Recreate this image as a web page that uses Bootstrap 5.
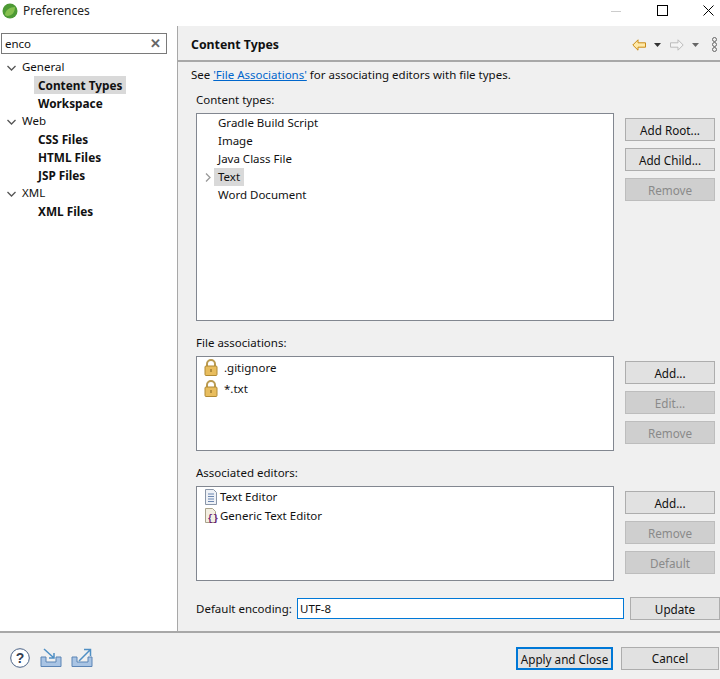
<!DOCTYPE html>
<html lang="en"><head><meta charset="utf-8"><title>Preferences</title>
<link href="https://cdn.jsdelivr.net/npm/bootstrap@5.3.0/dist/css/bootstrap.min.css" rel="stylesheet">
<style>
html,body{height:100%;overflow:hidden}
body{font-family:"Noto Sans","Open Sans",sans-serif;font-size:11.5px;line-height:18px;color:#111;background:#f0f0f0}
.win{width:720px;height:679px}
.titlebar{height:26px;background:#fff;padding:0 0 5px 2px}
.titlebar .ttl{margin-left:5px;color:#222;font-size:12px}
.winctl{margin-right:-11px}
.winbtn{width:46px;height:21px}
.midrow{min-height:0}
.side{width:178px;background:#fff;border-right:1px solid #a8a8a8;padding-top:7px}
.searchbox{width:166px;height:21px;margin-left:1px;border:1px solid #7a7a7a;padding:0 5px 0 3px;background:#fff}
.searchx{color:#666;font-size:13px;font-weight:700;line-height:1}
.tree{margin-top:4px;list-style:none;padding:0}
.tree li{height:18px;display:flex;align-items:center}
.tw{width:22px;padding-left:7px;flex:none}
.lv2{padding-left:34px;font-weight:700;font-size:11.8px}
.lv2 span{padding:0 4px;line-height:18px}
.sel{background:#d9d9d9}
.main{width:542px}
.head{height:36px;padding:3px 3px 0 13px;border-bottom:2px solid #a8a8a8}
.head b{font-size:12.3px}
.arr1{margin-left:8px}.arr2{margin-left:9px}.arr3{margin-left:13px}
.seeline{padding:4px 0 0 13px;height:29px}
.seeline a{color:#0066cc}
.body-area{padding:0 0 0 18px;flex:1}
.lbl{height:18px;line-height:18px;margin-bottom:4px}
.sp{margin-top:13px}
.boxrow{display:flex;gap:11px}
.lbox{width:418px;background:#fff;border:1px solid #828790;list-style:none;margin:0;padding:0}
.btncol{width:90px;display:flex;flex-direction:column;gap:7px;padding-top:5px}
.wbtn{width:90px;height:23px;padding:0;border:1px solid #adadad;background:#e1e1e1;color:#111;border-radius:0;font-size:11.7px;line-height:20px;font-family:inherit}
.wbtn[disabled]{opacity:1;color:#8a8a8a;background:#cfcfcf;border-color:#bdbdbd}
.b1{height:208px}.b2{height:95px}
.ct{padding-left:21px}
.ct li{height:18px;display:flex;align-items:center;position:relative}
.ct span{padding:0 4px;margin-left:-4px;line-height:18px}
.ct svg{position:absolute;left:-13px;top:5px}
.il{padding:0 0 0 7px}
.il li{display:flex;align-items:center;height:21px;gap:6px}
.el{padding:0 0 0 7px}
.el li{display:flex;align-items:center;height:19px;gap:2px}
.gicon{margin-right:-2px}
.enc{height:23px;margin-top:16px;display:flex;align-items:center}
.enc span{width:96px;white-space:nowrap}
.enc input{width:327px;height:21px;border:1px solid #0078d7;margin-left:5px;padding:0 2px;font-size:11.5px;font-family:inherit;outline:0;color:#111}
.enc .wbtn{margin-left:6px}
.foot{height:48px;border-top:2px solid #a8a8a8;padding:4px 1px 0 10px}
.ic1{margin-left:10px}.ic2{margin-left:9px}
.okb{width:97px;border:2px solid #0078d7}
.cnb{width:98px}
</style></head><body>
<div class="win d-flex flex-column">
 <div class="titlebar d-flex align-items-center">
  <svg width="16" height="16" viewBox="0 0 16 16"><circle cx="8" cy="8" r="7.500" fill="#4d9a35"/><path d="M3 12C3 7 8 4 13 4c0 5-3 9-8 9z" fill="#86c04f"/></svg>
  <span class="ttl">Preferences</span>
  <div class="ms-auto d-flex winctl">
   <div class="winbtn d-flex align-items-center justify-content-center"><svg width="10" height="10"><path d="M0 5.500h10" stroke="#ccc"/></svg></div>
   <div class="winbtn d-flex align-items-center justify-content-center"><svg width="11" height="11"><rect x=".5" y=".5" width="10" height="10" fill="none" stroke="#000"/></svg></div>
   <div class="winbtn d-flex align-items-center justify-content-center"><svg width="11" height="11"><path d="M.5.5l10 10M10.500.5l-10 10" stroke="#000"/></svg></div>
  </div>
 </div>
 <div class="d-flex flex-grow-1 midrow">
  <div class="side">
   <div class="searchbox d-flex align-items-center justify-content-between"><span>enco</span><span class="searchx">✕</span></div>
   <ul class="tree">
    <li><span class="tw"><svg width="9" height="6"><path d="M.5 1l4 4 4-4" fill="none" stroke="#555" stroke-width="1.300"/></svg></span>General</li>
    <li class="lv2"><span class="sel">Content Types</span></li>
    <li class="lv2"><span>Workspace</span></li>
    <li><span class="tw"><svg width="9" height="6"><path d="M.5 1l4 4 4-4" fill="none" stroke="#555" stroke-width="1.300"/></svg></span>Web</li>
    <li class="lv2"><span>CSS Files</span></li>
    <li class="lv2"><span>HTML Files</span></li>
    <li class="lv2"><span>JSP Files</span></li>
    <li><span class="tw"><svg width="9" height="6"><path d="M.5 1l4 4 4-4" fill="none" stroke="#555" stroke-width="1.300"/></svg></span>XML</li>
    <li class="lv2"><span>XML Files</span></li>
   </ul>
  </div>
  <div class="main d-flex flex-column">
   <div class="head d-flex align-items-center">
    <b>Content Types</b>
    <div class="ms-auto d-flex align-items-center">
     <svg width="14" height="12" viewBox="0 0 14 12"><path d="M.8 6L6 .8v3h7.500v4.400H6v3z" fill="#ffe9a8" stroke="#c98a16"/></svg>
     <svg class="arr1" width="7" height="4"><path d="M0 0h7L3.500 4z" fill="#333"/></svg>
     <svg class="arr2" width="14" height="12" viewBox="0 0 14 12"><path d="M13.200 6L8 .8v3H.5v4.400H8v3z" fill="#f4f4f4" stroke="#bbb"/></svg>
     <svg class="arr1" width="7" height="4"><path d="M0 0h7L3.500 4z" fill="#666"/></svg>
     <svg class="arr3" width="5" height="15"><g fill="none" stroke="#666"><circle cx="2.500" cy="2.500" r="2"/><circle cx="2.500" cy="7.500" r="2"/><circle cx="2.500" cy="12.500" r="2"/></g></svg>
    </div>
   </div>
   <div class="seeline">See <a href="#">'File Associations'</a> for associating editors with file types.</div>
   <div class="body-area">
    <div class="lbl">Content types:</div>
    <div class="boxrow">
     <ul class="lbox b1 ct">
      <li>Gradle Build Script</li><li>Image</li><li>Java Class File</li>
      <li><svg width="6" height="9"><path d="M1 .5l4 4-4 4" fill="none" stroke="#999" stroke-width="1.300"/></svg><span class="sel">Text</span></li>
      <li>Word Document</li>
     </ul>
     <div class="btncol"><button class="wbtn">Add Root...</button><button class="wbtn">Add Child...</button><button class="wbtn" disabled>Remove</button></div>
    </div>
    <div class="lbl sp">File associations:</div>
    <div class="boxrow">
     <ul class="lbox b2 il">
      <li><svg width="14" height="17" viewBox="0 0 14 17"><path d="M3 8V5a4 4 0 018 0v3" fill="none" stroke="#b99a50" stroke-width="2"/><rect x="1" y="7" width="12" height="9.500" rx="1" fill="#e8bd5e" stroke="#b08a35"/><path d="M7 10v3" stroke="#7a5c1c"/></svg>.gitignore</li>
      <li><svg width="14" height="17" viewBox="0 0 14 17"><path d="M3 8V5a4 4 0 018 0v3" fill="none" stroke="#b99a50" stroke-width="2"/><rect x="1" y="7" width="12" height="9.500" rx="1" fill="#e8bd5e" stroke="#b08a35"/><path d="M7 10v3" stroke="#7a5c1c"/></svg>*.txt</li>
     </ul>
     <div class="btncol"><button class="wbtn">Add...</button><button class="wbtn" disabled>Edit...</button><button class="wbtn" disabled>Remove</button></div>
    </div>
    <div class="lbl sp">Associated editors:</div>
    <div class="boxrow">
     <ul class="lbox b2 el">
      <li><svg width="14" height="16" viewBox="0 0 14 16"><path d="M1.500.5h8l3 3v12h-11z" fill="#eef1f6" stroke="#8a96a8"/><path d="M4 5h6M4 7.500h6M4 10h6M4 12.500h6" stroke="#6b86b0"/></svg>Text Editor</li>
      <li><svg class="gicon" width="16" height="17" viewBox="0 0 16 17"><path d="M1.500 1.500h7l3 3v11h-10z" fill="#f3efe2" stroke="#a9a28a"/><text x="3.500" y="14" font-size="9" font-weight="700" fill="#6a1670" font-family="Liberation Mono,monospace">{}</text></svg>Generic Text Editor</li>
     </ul>
     <div class="btncol"><button class="wbtn">Add...</button><button class="wbtn" disabled>Remove</button><button class="wbtn" disabled>Default</button></div>
    </div>
    <div class="enc"><span>Default encoding:</span><input value="UTF-8" aria-label="Default encoding"><button class="wbtn">Update</button></div>
   </div>
  </div>
 </div>
 <div class="foot d-flex align-items-center">
  <svg width="20" height="20" viewBox="0 0 20 20"><circle cx="10" cy="10" r="9.300" fill="#fff" stroke="#4a6286"/><text x="10" y="15" text-anchor="middle" font-size="14" font-weight="700" fill="#333d52" font-family="Liberation Sans,sans-serif">?</text></svg>
  <svg class="ic1" width="22" height="20" viewBox="0 0 22 20"><path d="M1 9v9.500h20V9h-5v5H6V9z" fill="#a9c4e4" stroke="#5b84b5"/><path d="M4 1l10 9M14 5v5H9" fill="none" stroke="#4f8fc4" stroke-width="1.500"/></svg>
  <svg class="ic2" width="22" height="20" viewBox="0 0 22 20"><path d="M1 9v9.500h20V9h-4v5H6V9z" fill="#a9c4e4" stroke="#5b84b5"/><path d="M8 13L19 2M13 1.500h6.500V8" fill="none" stroke="#4f8fc4" stroke-width="1.500"/></svg>
  <div class="ms-auto d-flex gap-2"><button class="wbtn okb">Apply and Close</button><button class="wbtn cnb">Cancel</button></div>
 </div>
</div>
</body></html>
